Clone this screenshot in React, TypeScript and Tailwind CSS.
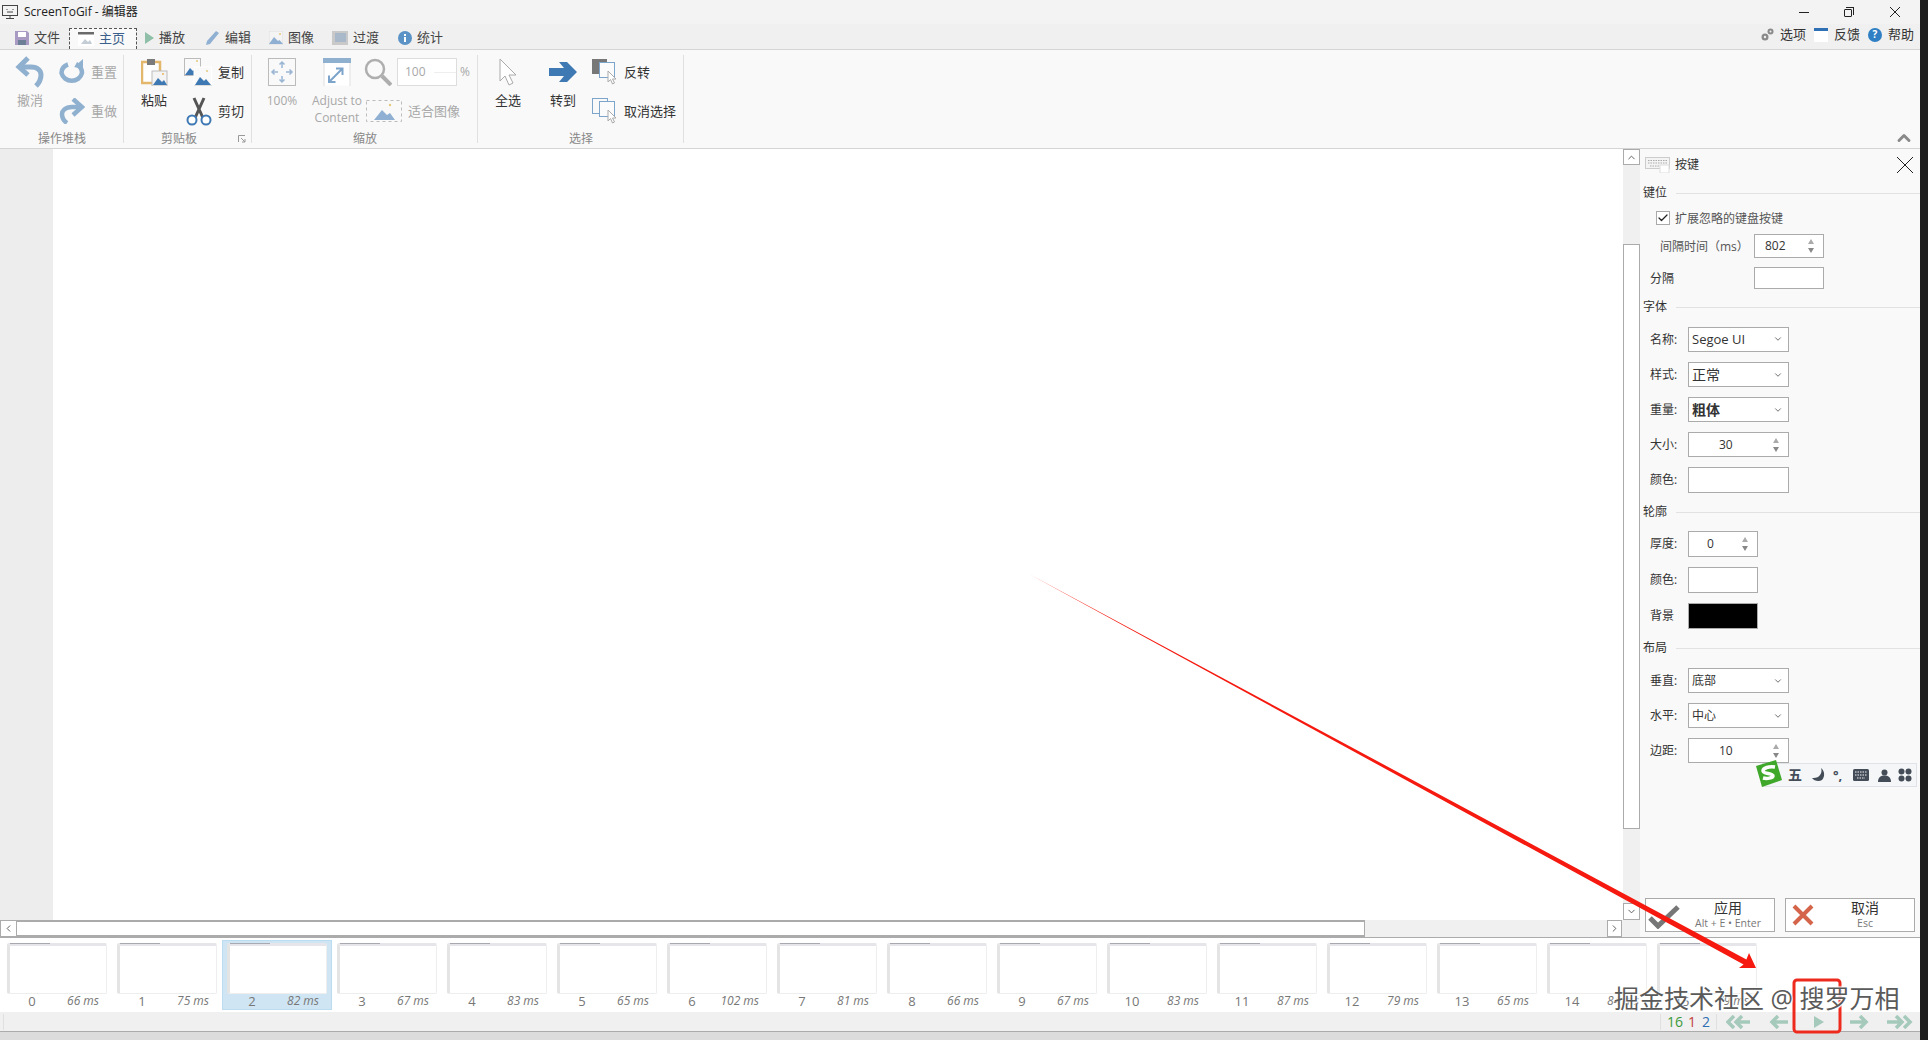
import { Check, ChevronDown, ChevronLeft, ChevronRight, ChevronUp } from 'lucide-react';
import type { ReactNode } from 'react';

const FONT = '[font-family:"Open_Sans","Noto_Sans_CJK_SC",sans-serif]';

// ribbon icons
function SaveIcon() {
  return (
    <svg width="14" height="14" viewBox="0 0 14 14">
      <path d="M0 0H12L14 2V14H0Z" fill="#a99ac4" />
      <rect x="3" y="1" width="8" height="5" fill="#fff" />
      <rect x="3" y="9" width="8" height="5" fill="#6d7f96" />
    </svg>
  );
}

function WindowIcon() {
  return (
    <svg width="16" height="14" viewBox="0 0 16 14">
      <rect width="16" height="14" fill="#fff" />
      <rect width="16" height="2.5" fill="#6a6a6a" />
      <path d="M3 12L7 7L10 10L12 8L14 12Z" fill="#c4cdd6" />
    </svg>
  );
}

function PictureIcon({ size = 14 }: { size?: number }) {
  return (
    <svg width={size} height={size} viewBox="0 0 14 14">
      <rect width="14" height="14" fill="#f4f4f4" stroke="#ddd" />
      <circle cx="11" cy="3" r="1" fill="#e6c77c" />
      <path d="M0 13L5 6L9 10L10.5 9L14 13Z" fill="#8fb0d2" />
    </svg>
  );
}

function Undo() {
  return (
    <svg width="30" height="32" viewBox="0 0 30 32" fill="none" stroke="#8fb0cf" strokeWidth="5">
      <path d="M13 2L4 11L13 19" />
      <path d="M5 11H16C23 11 26 15 26 19C26 24 24 27 21 30" />
    </svg>
  );
}

function Reset() {
  return (
    <svg width="26" height="26" viewBox="0 0 26 26" fill="none">
      <path d="M9 5.5C4.5 7 2.5 10 2.5 14A10.5 10 0 0 0 23 14C23 10 21 7 17 5" stroke="#8fb0cf" strokeWidth="4.5" />
      <path d="M24 0V10L15 8Z" fill="#8fb0cf" />
    </svg>
  );
}

function Redo() {
  return (
    <svg width="26" height="26" viewBox="0 0 26 26" fill="none" stroke="#8fb0cf" strokeWidth="4.5">
      <path d="M14 1L23 9L14 17" />
      <path d="M22 9H13C6 9 3 13 3 16C3 20 5 23 8 25" />
    </svg>
  );
}

function Paste() {
  return (
    <svg width="27" height="28" viewBox="0 0 27 28">
      <rect x="1" y="4" width="18" height="21" fill="#fff" stroke="#e3b76c" strokeWidth="2.5" />
      <rect x="6" y="1" width="8" height="6" fill="#7b7b7b" />
      <rect x="11" y="13" width="15" height="15" fill="#f4f4f4" stroke="#bbb" />
      <circle cx="22" cy="16" r="1" fill="#e6b65f" />
      <path d="M12 27L17 20L21 24L23 22L26 27Z" fill="#3f79b4" />
    </svg>
  );
}

function CopyIcon() {
  return (
    <svg width="28" height="28" viewBox="0 0 28 28">
      <rect x="0.5" y="0.5" width="16" height="17" fill="#f9f9f9" stroke="#bbb" />
      <path d="M1 17L6 10L9 13L11 11L16 17Z" fill="#3f79b4" />
      <circle cx="13" cy="3" r="1" fill="#e6c77c" />
      <rect x="10" y="9" width="17.5" height="18.5" fill="#f9f9f9" stroke="#fff" />
      <path d="M11 27L16 19L20 23L22 21L27 27Z" fill="#3f79b4" />
      <circle cx="23" cy="13" r="1" fill="#e6c77c" />
      <path d="M10 28H28" stroke="#bbb" />
    </svg>
  );
}

function Scissors() {
  return (
    <svg width="26" height="29" viewBox="0 0 26 29" fill="none">
      <path d="M8 1L17 21M18 1L9 21" stroke="#555" strokeWidth="3" />
      <circle cx="6" cy="23" r="4.5" stroke="#3f79b4" strokeWidth="2" fill="#fff" />
      <circle cx="20" cy="23" r="4.5" stroke="#3f79b4" strokeWidth="2" fill="#fff" />
    </svg>
  );
}

function FitArrows() {
  return (
    <svg width="28" height="28" viewBox="0 0 28 28" fill="none" stroke="#9ab6d3" strokeWidth="1.5">
      <rect x="0.5" y="0.5" width="27" height="27" stroke="#bbb" strokeWidth="1" />
      <path d="M14 4V10M11.5 6.5L14 4L16.5 6.5M14 18V24M11.5 21.5L14 24L16.5 21.5M4 14H10M6.5 11.5L4 14L6.5 16.5M18 14H24M21.5 11.5L24 14L21.5 16.5" />
    </svg>
  );
}

function AdjustIcon() {
  return (
    <svg width="28" height="28" viewBox="0 0 28 28" fill="none">
      <rect x="0.5" y="0.5" width="27" height="27" fill="#fff" />
      <rect width="28" height="5" fill="#8fb0cf" />
      <path d="M1 28V5M27 28V5" stroke="#ddd" />
      <path d="M6 24L19 11M13 10.5H19.5V17M6 17.5V24H12.5" stroke="#7da5cb" strokeWidth="2" />
    </svg>
  );
}

function Magnifier() {
  return (
    <svg width="28" height="28" viewBox="0 0 28 28" fill="none" stroke="#aeaeae">
      <circle cx="11" cy="11" r="9" strokeWidth="2.5" />
      <path d="M18 18L27 27" strokeWidth="4" />
    </svg>
  );
}

function FitImage() {
  return (
    <svg width="36" height="22" viewBox="0 0 36 22" fill="none">
      <rect x="0.5" y="0.5" width="35" height="21" stroke="#bbb" strokeDasharray="3 3" />
      <path d="M8 20L16 10L21 15L24 13L29 20Z" fill="#8fb0d2" />
      <circle cx="24" cy="5" r="1.2" fill="#e6c77c" />
    </svg>
  );
}

function Cursor() {
  return (
    <svg width="18" height="28" viewBox="0 0 18 28" fill="#fff" stroke="#aaa">
      <path d="M1 1V23L6 18L10 27L14 25L10 17H17Z" />
    </svg>
  );
}

function GoArrow() {
  return (
    <svg width="28" height="20" viewBox="0 0 28 20">
      <path d="M0 6H15L10 0H18L28 10L18 20H10L15 14H0Z" fill="#3f79b4" />
    </svg>
  );
}

function Pages({ filled }: { filled?: boolean }) {
  return (
    <svg width="26" height="26" viewBox="0 0 26 26" fill="none">
      <rect x={filled ? 0 : 0.5} y={filled ? 0 : 0.5} width="15" height="15" fill={filled ? '#777' : 'none'} stroke="#7da5cb" strokeWidth={filled ? 0 : 1} />
      <rect x="7.5" y="3.5" width="15" height="15" fill="#fbfbfb" stroke="#7da5cb" />
      <path d="M16 12V23L18.5 20.5L20.5 25L22.5 24L20.5 20H24Z" fill="#fff" stroke="#aaa" />
    </svg>
  );
}

function CrossLine({ size, className = '' }: { size: number; className?: string }) {
  return (
    <svg width={size} height={size} viewBox="0 0 16 16" fill="none" stroke="#222" strokeWidth={16 / size} className={className}>
      <path d="M0 0L16 16M16 0L0 16" />
    </svg>
  );
}

// left side keeps the ribbon columns simple
function Big({ width, icon, label, muted, labelSize = 'text-[13px]' }: { width: string; icon: ReactNode; label: string; muted?: boolean; labelSize?: string }) {
  return (
    <div className={`flex flex-col items-center pt-2 ${width}`}>
      <div className="h-7 flex items-center justify-center">{icon}</div>
      <div className={`mt-[6px] leading-[17px] whitespace-pre-line text-center ${labelSize} ${muted ? 'text-[#a8a8a8]' : 'text-[#333]'}`}>{label}</div>
    </div>
  );
}

function Small({ icon, label, muted, className = '' }: { icon: ReactNode; label: string; muted?: boolean; className?: string }) {
  return (
    <div className={`h-7 flex items-center ${className}`}>
      {icon}
      <span className={`ml-[6px] mt-[1px] text-[13px] whitespace-nowrap ${muted ? 'text-[#a8a8a8]' : 'text-[#333]'}`}>{label}</span>
    </div>
  );
}

function Group({ width, label, labelClass = '', children, extra }: { width: string; label: string; labelClass?: string; children: ReactNode; extra?: ReactNode }) {
  return (
    <div className={`relative h-full flex flex-col ${width}`}>
      <div className="flex flex-1">{children}</div>
      <div className={`h-[18px] leading-[18px] text-center text-xs text-[#888] ${labelClass}`}>{label}</div>
      {extra}
      <div className="absolute right-0 top-[5px] bottom-[5px] w-px bg-[#e0e0e0]" />
    </div>
  );
}

function Tab({ icon, label, className }: { icon: ReactNode; label: string; className: string }) {
  return (
    <div className={`flex items-center h-full pt-[3px] text-[13px] text-[#444] ${className}`}>
      {icon}
      <span className="ml-[5px]">{label}</span>
    </div>
  );
}

function Section({ label, className }: { label: string; className: string }) {
  return (
    <div className={`flex items-center h-4 pl-[3px] ${className}`}>
      <span className="text-xs text-[#333] w-[33px]">{label}</span>
      <div className="flex-1 h-px bg-[#e2e2e2]" />
    </div>
  );
}

function Field({ label, width, height, className, children, dark }: { label: string; width: string; height: string; className: string; children?: ReactNode; dark?: boolean }) {
  return (
    <div className={`flex items-center pl-[10px] ${className}`}>
      <span className="text-xs text-[#333] w-[38px] whitespace-nowrap">{label}</span>
      <div className={`${width} ${height} border border-[#ababab] flex items-center text-xs text-[#333] ${dark ? 'bg-black' : 'bg-white'}`}>{children}</div>
    </div>
  );
}

function Select({ value, valueClass = '' }: { value: string; valueClass?: string }) {
  return (
    <div className="flex items-center justify-between w-full pl-[3px] pr-[5px]">
      <span className={valueClass}>{value}</span>
      <ChevronDown size={10} strokeWidth={2} className="text-[#555]" />
    </div>
  );
}

function Spin({ value, valueClass }: { value: string; valueClass: string }) {
  return (
    <div className="flex items-center justify-between w-full">
      <span className={`text-center ${valueClass}`}>{value}</span>
      <div className="flex flex-col gap-[4px] mr-[9px]">
        <div className="w-0 h-0 border-x-[3.5px] border-x-transparent border-b-[5px] border-b-[#aaa]" />
        <div className="w-0 h-0 border-x-[3.5px] border-x-transparent border-t-[5px] border-t-[#888]" />
      </div>
    </div>
  );
}

const FRAMES = [
  ['0', '66'], ['1', '75'], ['2', '82'], ['3', '67'], ['4', '83'], ['5', '65'], ['6', '102'], ['7', '81'],
  ['8', '66'], ['9', '67'], ['10', '83'], ['11', '87'], ['12', '79'], ['13', '65'], ['14', '84'], ['15', '79'],
];

function Frame({ index, ms, selected }: { index: string; ms: string; selected?: boolean }) {
  return (
    <div className={`shrink-0 w-[110px] h-[70px] px-[4px] pt-[2px] border ${selected ? 'bg-[#cfe5f4] border-[#bcdcf0]' : 'border-transparent'}`}>
      <div className="h-[51px] bg-white border border-[#eee] border-l-[3px] border-l-[#e4e4e4] border-t-[3px] border-t-[#e6e6ea] rounded-[2px]">
        <div className="-mt-[3px] w-[40px] h-px bg-[#a8a8b0]" />
      </div>
      <div className="relative h-[16px] -mt-[1px] leading-[16px] text-[#777]">
        <span className="absolute left-0 w-[50px] text-center text-[13px]">{index}</span>
        <span className="absolute right-[8px] text-xs italic">{ms} ms</span>
      </div>
    </div>
  );
}

export default function App() {
  return (
    <div className={`relative w-[1928px] h-[1040px] overflow-hidden flex bg-[#1e1e1e] ${FONT}`}>
      <div className="w-[1920px] flex flex-col bg-white shrink-0">
        {/* title bar */}
        <div className="h-6 shrink-0 flex items-center bg-[#f3f3f3] pl-[2px]">
          <svg width="16" height="14" viewBox="0 0 16 14" fill="none" stroke="#444">
            <rect x="0.5" y="0.5" width="15" height="10" />
            <path d="M4 13.5H12M8 11V13M5 4V5M11 4V5M5 7H11" />
          </svg>
          <span className="ml-[6px] text-xs text-[#222]">ScreenToGif - 编辑器</span>
          <div className="ml-auto flex items-center h-full">
            <div className="w-[10px] h-px bg-[#222] mr-[35px]" />
            <div className="relative w-[10px] h-[10px] mr-[36px]">
              <div className="absolute left-0 bottom-0 w-2 h-2 border border-[#222] rounded-[1px]" />
              <div className="absolute right-0 top-0 w-2 h-2 border-t border-r border-[#222]" />
            </div>
            <CrossLine size={10} className="mr-[20px]" />
          </div>
        </div>
        {/* tabs */}
        <div className="h-[26px] shrink-0 flex items-stretch bg-[#f0f0f0] border-b border-[#d5d5d5] pr-[6px]">
          <Tab icon={<SaveIcon />} label="文件" className="ml-[15px]" />
          <div className="ml-[9px] mt-[4px] w-[68px] pr-[3px] flex items-center justify-center border border-b-0 border-dashed border-[#555] bg-[#f9f9f9] text-[13px] text-[#3a5f8a]">
            <WindowIcon />
            <span className="ml-[5px]">主页</span>
          </div>
          <Tab
            icon={<div className="w-0 h-0 border-y-[6px] border-y-transparent border-l-[9px] border-l-[#8fbfa8]" />}
            label="播放"
            className="ml-[8px]"
          />
          <Tab
            icon={
              <svg width="14" height="14" viewBox="0 0 14 14">
                <path d="M0 14L1 10L10 0L13 2L4 13Z" fill="#8fb0d2" />
              </svg>
            }
            label="编辑"
            className="ml-[21px]"
          />
          <Tab icon={<PictureIcon />} label="图像" className="ml-[18px]" />
          <Tab
            icon={
              <svg width="16" height="14" viewBox="0 0 16 14">
                <rect width="16" height="14" fill="#c9c9c9" />
                <rect x="3" y="2" width="11" height="9" fill="#a9b9ca" />
              </svg>
            }
            label="过渡"
            className="ml-[18px]"
          />
          <Tab
            icon={
              <svg width="14" height="14" viewBox="0 0 14 14">
                <circle cx="7" cy="7" r="7" fill="#5b93c7" />
                <rect x="6" y="6" width="2" height="5" fill="#fff" />
                <rect x="6" y="3" width="2" height="2" fill="#fff" />
              </svg>
            }
            label="统计"
            className="ml-[19px]"
          />
          <div className="ml-auto flex items-center pb-[4px] text-[13px] text-[#333]">
            <svg width="13" height="13" viewBox="0 0 13 13" fill="#8a8a8a">
              <circle cx="4" cy="9" r="3.5" />
              <circle cx="9.5" cy="3.5" r="3" />
              <circle cx="4" cy="9" r="1.2" fill="#f0f0f0" />
              <circle cx="9.5" cy="3.5" r="1" fill="#f0f0f0" />
            </svg>
            <span className="ml-[6px]">选项</span>
            <div className="ml-[8px] w-[14px] h-[14px] bg-white border-t-[3px] border-t-[#2f6fb3]" />
            <span className="ml-[6px]">反馈</span>
            <div className="ml-[8px] w-[14px] h-[14px] rounded-full bg-[#2f7fc4] text-white text-[10px] font-bold flex items-center justify-center">?</div>
            <span className="ml-[6px]">帮助</span>
          </div>
        </div>
        {/* ribbon */}
        <div className="relative h-[99px] shrink-0 flex bg-[#f9f9f9] border-b border-[#d5d5d5]">
          <Group width="w-[124px]" label="操作堆栈">
            <Big width="w-[48px] ml-[6px]" icon={<Undo />} label="撤消" muted />
            <div className="pt-2 ml-[5px] flex flex-col gap-[11px]">
              <Small icon={<Reset />} label="重置" muted />
              <Small icon={<Redo />} label="重做" muted />
            </div>
          </Group>
          <Group
            width="w-[128px]"
            label="剪贴板"
            labelClass="pr-[18px]"
            extra={
              <svg width="8" height="8" viewBox="0 0 8 8" fill="none" stroke="#999" className="absolute right-[6px] bottom-[5px]">
                <path d="M0.5 7V0.5H7" />
                <path d="M3 3L7 7M4 7H7V4" />
              </svg>
            }
          >
            <Big width="w-[48px] ml-[6px]" icon={<Paste />} label="粘贴" />
            <div className="pt-2 ml-[5px] flex flex-col gap-[11px]">
              <Small icon={<CopyIcon />} label="复制" className="pl-[1px]" />
              <Small icon={<Scissors />} label="剪切" className="pl-[3px]" />
            </div>
          </Group>
          <Group width="w-[226px]" label="缩放">
            <Big width="w-[48px] ml-[6px]" icon={<FitArrows />} label="100%" muted labelSize="text-xs" />
            <Big width="w-[56px] ml-[3px]" icon={<AdjustIcon />} label={'Adjust to\nContent'} muted labelSize="text-xs" />
            <div className="pt-2 -ml-[1px] flex flex-col gap-[11px]">
              <div className="h-7 flex items-center">
                <Magnifier />
                <div className="ml-[5px] w-[60px] h-[28px] bg-white border border-[#ddd] text-xs text-[#a8a8a8] flex items-center pl-[7px]">
                  100
                  <div className="ml-[8px] w-[24px] h-px bg-[#eee]" />
                </div>
                <span className="ml-[3px] text-xs text-[#a8a8a8]">%</span>
              </div>
              <Small icon={<FitImage />} label="适合图像" muted className="pl-[2px]" />
            </div>
          </Group>
          <Group width="w-[206px]" label="选择">
            <Big width="w-[44px] ml-[8px]" icon={<Cursor />} label="全选" />
            <Big width="w-[44px] ml-[11px]" icon={<GoArrow />} label="转到" />
            <div className="pt-2 ml-[7px] flex flex-col gap-[11px]">
              <Small icon={<Pages filled />} label="反转" />
              <Small icon={<Pages />} label="取消选择" />
            </div>
          </Group>
          <ChevronUp size={20} strokeWidth={3.5} className="absolute right-[6px] bottom-0 text-[#8a8a8a]" />
        </div>
        {/* editor */}
        <div className="h-[788px] shrink-0 flex">
          <div className="w-[1640px] flex flex-col">
            <div className="flex h-[771px]">
              <div className="w-[53px] bg-[#ededed]" />
              <div className="w-[1570px] bg-white" />
              <div className="w-[17px] bg-[#f0f0f0] flex flex-col">
                <div className="h-[16px] bg-white border border-[#ababab] flex items-center justify-center">
                  <ChevronUp size={11} className="text-[#555]" />
                </div>
                <div className="mt-[79px] h-[585px] bg-white border border-[#ababab]" />
                <div className="mt-auto h-[17px] bg-white border border-[#ababab] flex items-center justify-center">
                  <ChevronDown size={11} className="text-[#555]" />
                </div>
              </div>
            </div>
            <div className="h-[17px] flex bg-[#f0f0f0]">
              <div className="w-[17px] bg-white border border-[#ababab] flex items-center justify-center">
                <ChevronLeft size={11} className="text-[#555]" />
              </div>
              <div className="w-[1348px] bg-white border-y-2 border-r border-[#ababab]" />
              <div className="ml-auto mr-[18px] w-[15px] bg-white border border-[#ababab] flex items-center justify-center">
                <ChevronRight size={11} className="text-[#555]" />
              </div>
            </div>
          </div>
          {/* keystroke panel */}
          <div className="w-[280px] bg-[#f9f9f9] flex flex-col">
            <div className="h-[32px] flex items-center pl-[5px] pr-[7px]">
              <svg width="25" height="16" viewBox="0 0 25 16" fill="none">
                <rect x="0.5" y="0.5" width="24" height="11" fill="#f4f4f4" stroke="#ccc" />
                <path d="M3 3.5H22M3 6H22M5 9H15" stroke="#aaa" strokeDasharray="1.5 1" />
                <rect x="15" y="8" width="9" height="8" fill="#fff" stroke="#ddd" />
              </svg>
              <span className="ml-[5px] text-xs text-[#333]">按键</span>
              <CrossLine size={16} className="ml-auto" />
            </div>
            <Section label="键位" className="mt-[4px]" />
            <div className="mt-[9px] h-4 pl-[16px] flex items-center">
              <div className="w-[14px] h-[14px] bg-white border border-[#aaa] flex items-center justify-center">
                <Check size={12} strokeWidth={2.5} className="text-[#222]" />
              </div>
              <span className="ml-[5px] mt-[1px] text-xs text-[#555]">扩展忽略的键盘按键</span>
            </div>
            <div className="mt-[8px] flex items-center pl-[20px]">
              <span className="w-[94px] mt-[1px] text-xs text-[#555] whitespace-nowrap">间隔时间（ms）</span>
              <div className="w-[70px] h-[24px] bg-white border border-[#ababab] flex items-center text-xs text-[#333]">
                <Spin value="802" valueClass="ml-[10px]" />
              </div>
            </div>
            <div className="mt-[9px] flex items-center pl-[10px]">
              <span className="w-[104px] mt-[1px] text-xs text-[#333]">分隔</span>
              <div className="w-[70px] h-[22px] bg-white border border-[#ababab]" />
            </div>
            <Section label="字体" className="mt-[10px]" />
            <Field label="名称:" width="w-[101px]" height="h-[25px]" className="mt-[12px]"><Select value="Segoe UI" valueClass="text-[13px]" /></Field>
            <Field label="样式:" width="w-[101px]" height="h-[25px]" className="mt-[10px]"><Select value="正常" valueClass="text-sm" /></Field>
            <Field label="重量:" width="w-[101px]" height="h-[25px]" className="mt-[10px]"><Select value="粗体" valueClass="text-sm font-bold" /></Field>
            <Field label="大小:" width="w-[101px]" height="h-[25px]" className="mt-[10px]"><Spin value="30" valueClass="ml-[30px]" /></Field>
            <Field label="颜色:" width="w-[101px]" height="h-[26px]" className="mt-[10px]" />
            <Section label="轮廓" className="mt-[11px]" />
            <Field label="厚度:" width="w-[70px]" height="h-[26px]" className="mt-[11px]"><Spin value="0" valueClass="ml-[18px]" /></Field>
            <Field label="颜色:" width="w-[70px]" height="h-[26px]" className="mt-[10px]" />
            <Field label="背景" width="w-[70px]" height="h-[26px]" className="mt-[10px]" dark />
            <Section label="布局" className="mt-[11px]" />
            <Field label="垂直:" width="w-[101px]" height="h-[25px]" className="mt-[12px]"><Select value="底部" /></Field>
            <Field label="水平:" width="w-[101px]" height="h-[25px]" className="mt-[10px]"><Select value="中心" /></Field>
            <Field label="边距:" width="w-[101px]" height="h-[25px]" className="mt-[10px]"><Spin value="10" valueClass="ml-[30px]" /></Field>
            <div className="mt-auto mb-[5px] px-[5px] flex gap-[10px]">
              <div className="relative w-[130px] h-[34px] bg-white border border-[#ababab] text-center">
                <svg width="32" height="24" viewBox="0 0 32 24" fill="none" stroke="#777" strokeWidth="5" className="absolute left-[2px] top-[6px]">
                  <path d="M2 13L10 21L30 2" />
                </svg>
                <div className="pl-[36px] text-sm leading-[18px] text-[#333]">应用</div>
                <div className="pl-[36px] text-[10.5px] leading-[13px] text-[#777] whitespace-nowrap">Alt + E • Enter</div>
              </div>
              <div className="relative w-[130px] h-[34px] bg-white border border-[#ababab] text-center">
                <svg width="22" height="22" viewBox="0 0 22 22" fill="none" stroke="#d4654a" strokeWidth="4" className="absolute left-[6px] top-[5px]">
                  <path d="M2 2L20 20M20 2L2 20" />
                </svg>
                <div className="pl-[30px] text-sm leading-[18px] text-[#333]">取消</div>
                <div className="pl-[30px] text-[10.5px] leading-[13px] text-[#777]">Esc</div>
              </div>
            </div>
          </div>
        </div>
        {/* frame strip */}
        <div className="h-[75px] shrink-0 flex items-start pl-[2px] pt-[2px] bg-white border-t border-[#ababab] overflow-hidden">
          {FRAMES.map(([index, ms], i) => (
            <Frame key={index} index={index} ms={ms} selected={i === 2} />
          ))}
        </div>
        {/* footer */}
        <div className="h-5 shrink-0 flex items-center bg-[#f0f0f0] border-b border-[#ababab] relative">
          <div className="ml-[3px] w-px h-4 bg-[#e0e0e0]" />
          <div className="ml-auto flex items-center h-full text-sm">
            <div className="w-px h-4 bg-[#e0e0e0] mr-[6px]" />
            <span className="text-[#3a9a3a]">16</span>
            <span className="ml-[5px] text-[#c2413a]">1</span>
            <span className="ml-[6px] text-[#2f6fb3]">2</span>
            <div className="w-px h-4 bg-[#e0e0e0] ml-[6px]" />
            <svg width="194" height="14" viewBox="0 0 194 14" fill="none" stroke="#a5c9bb" strokeWidth="3.5" className="ml-[9px]">
              <path d="M8 1L2 7L8 13M16 1L10 7L16 13M10 7H24" />
              <path d="M52 1L46 7L52 13M46 7H62" />
              <path d="M88 1L98 7L88 13Z" fill="#a5c9bb" stroke="none" />
              <path d="M124 7H140M134 1L140 7L134 13" />
              <path d="M161 7H175M170 1L176 7L170 13M178 1L184 7L178 13" />
            </svg>
          </div>
        </div>
        <div className="flex-1 bg-[#dcdcdc]" />
      </div>
      {/* pointer drawn over the screenshot */}
      <svg width="1928" height="1040" viewBox="0 0 1928 1040" className="absolute inset-0 pointer-events-none">
        <polygon points="1029,574 1746.4,959.4 1749,953 1756,968 1739,968 1743.6,964.6" fill="#f5190f" />
        <rect x="1794" y="980" width="46" height="52" rx="3" fill="none" stroke="#ee2a1e" strokeWidth="3" />
      </svg>
      {/* IME toolbar */}
      <div className="absolute left-[1762px] top-[763px] w-[155px] h-[24px] bg-[#f4f6f8] border border-[#dfe3e8] flex items-center pl-[25px] text-[#444c58]">
        <span className="text-[14px] font-bold w-[14px] leading-4">五</span>
        <svg width="14" height="14" viewBox="0 0 14 14" fill="#444c58" className="ml-[9px]">
          <path d="M10 0C12 5 8 11 1 10C3 13 8 14 11 12C14 9 14 3 10 0Z" />
        </svg>
        <span className="ml-[8px] text-[13px] font-bold w-[12px] leading-3">°,</span>
        <svg width="16" height="12" viewBox="0 0 16 12" className="ml-[8px]">
          <rect width="16" height="12" rx="1.5" fill="#444c58" />
          <path d="M2 3H14M2 6H14M4 9H12" stroke="#f4f6f8" strokeDasharray="1.5 1" />
        </svg>
        <svg width="13" height="13" viewBox="0 0 13 13" fill="#444c58" className="ml-[9px]">
          <circle cx="6.5" cy="3.5" r="3" />
          <path d="M0 13C0 8 3 6.5 6.5 6.5S13 8 13 13Z" />
        </svg>
        <svg width="14" height="14" viewBox="0 0 14 14" fill="#444c58" className="ml-[7px]">
          <circle cx="3.5" cy="3.5" r="3" />
          <circle cx="10.5" cy="3.5" r="3" />
          <circle cx="3.5" cy="10.5" r="3" />
          <circle cx="10.5" cy="10.5" r="3" />
        </svg>
      </div>
      <svg width="28" height="28" viewBox="0 0 28 28" className="absolute left-[1755px] top-[760px]">
        <path d="M1 6L21 0L27 20L7 27Z" fill="#3fa82b" />
        <path d="M20 7C14 6 8 8 8 11C8 14 18 13 18 16C18 18 12 19 8 18" fill="none" stroke="#fff" strokeWidth="3.5" />
      </svg>
      {/* watermark */}
      <div className="absolute left-[1614px] top-[980px] text-[25px] leading-[36px] whitespace-nowrap text-[#5a5a5a] [text-shadow:1px_1px_1px_#fff,-1px_-1px_1px_#fff]">
        掘金技术社区 @ 搜罗万相
      </div>
    </div>
  );
}
